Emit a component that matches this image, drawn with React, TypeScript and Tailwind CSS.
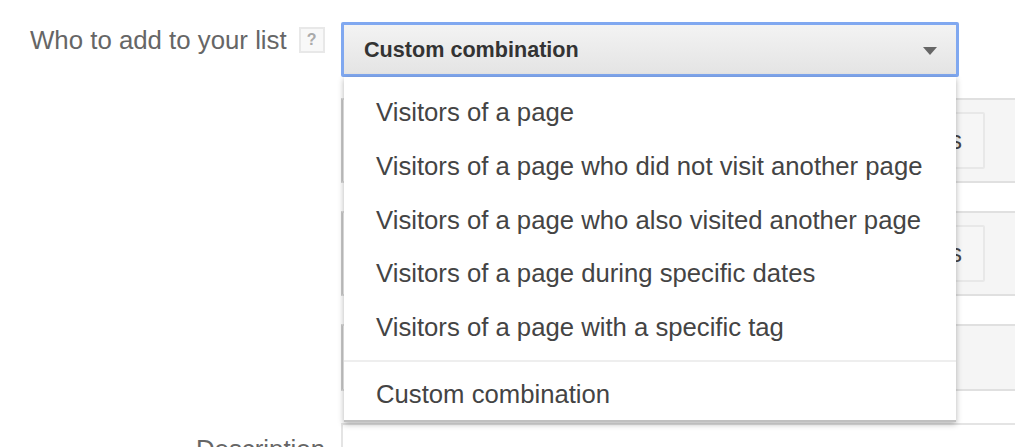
const options = [
  "Visitors of a page",
  "Visitors of a page who did not visit another page",
  "Visitors of a page who also visited another page",
  "Visitors of a page during specific dates",
  "Visitors of a page with a specific tag",
];

function Panel({ h, withButton }: { h: string; withButton?: boolean }) {
  return (
    <div className={`${h} flex justify-end border-y-2 border-l-2 border-y-[#e0e0e0] border-l-[#c8c8c8] bg-[#f5f5f5] pr-[30px] pt-[12px]`}>
      {withButton && (
        <div className="flex h-[57px] w-[120px] items-center justify-end rounded-[2px] border-2 border-[#e8e8e8] bg-[#f6f6f6] pr-[21px] text-[25px] text-[#444]">
          s
        </div>
      )}
    </div>
  );
}

export default function App() {
  return (
    <div className="h-[447px] w-[1015px] overflow-hidden bg-white font-['Liberation_Sans',sans-serif] antialiased">
      <div className="flex pt-[22px]">
        {/* left label */}
        <div className="flex w-[341px] shrink-0 flex-col items-start">
          <div className="mt-[2px] flex items-center pl-[30px]">
            <span className="text-[25.8px] leading-[32px] text-[#666]">Who to add to your list</span>
            <span className="ml-[12px] flex h-[26px] w-[26px] items-center justify-center border-2 border-[#e8e8e8] bg-[#f8f8f8] text-[16px] font-bold text-[#aaa]">
              ?
            </span>
          </div>
          <div className="mt-[377px] self-end pr-[16px] text-[25.8px] leading-[32px] text-[#666]">Description</div>
        </div>

        {/* right column */}
        <div className="relative w-[674px] shrink-0">
          <div className="flex h-[55px] w-[618px] items-center justify-between rounded-[2px] border-[3px] border-[#80a8f0] bg-gradient-to-b from-[#f3f3f3] to-[#e4e4e4] pl-[20px] pr-[19px]">
            <span className="mt-[1px] text-[21.6px] font-bold text-[#333]">Custom combination</span>
            <span className="mt-[2px] h-0 w-0 border-x-[7px] border-t-[8px] border-x-transparent border-t-[#666]" />
          </div>

          <div className="mt-[21px] flex flex-col gap-[28px]">
            <Panel h="h-[85px]" withButton />
            <Panel h="h-[85px]" withButton />
            <Panel h="h-[67px]" />
          </div>
          <div className="mt-[32px] h-[40px] border-l-2 border-t-2 border-[#e4e4e4]" />

          {/* open dropdown menu */}
          <div className="absolute left-[3px] top-[55px] w-[612px] border-b-[2px] border-[#c0c0c0] bg-white shadow-[0_2px_6px_rgba(0,0,0,0.3)]">
            <ul className="pt-[9px] text-[25.7px] text-[#444]">
              {options.map((o) => (
                <li key={o} className="flex h-[53.75px] items-center pl-[32px] leading-none">
                  {o}
                </li>
              ))}
            </ul>
            <div className="mt-[5px] border-t-2 border-[#eeeeee]" />
            <div className="flex h-[58px] items-center pl-[32px] pt-[8px] text-[25.7px] leading-none text-[#444]">
              Custom combination
            </div>
          </div>
        </div>
      </div>
    </div>
  );
}
